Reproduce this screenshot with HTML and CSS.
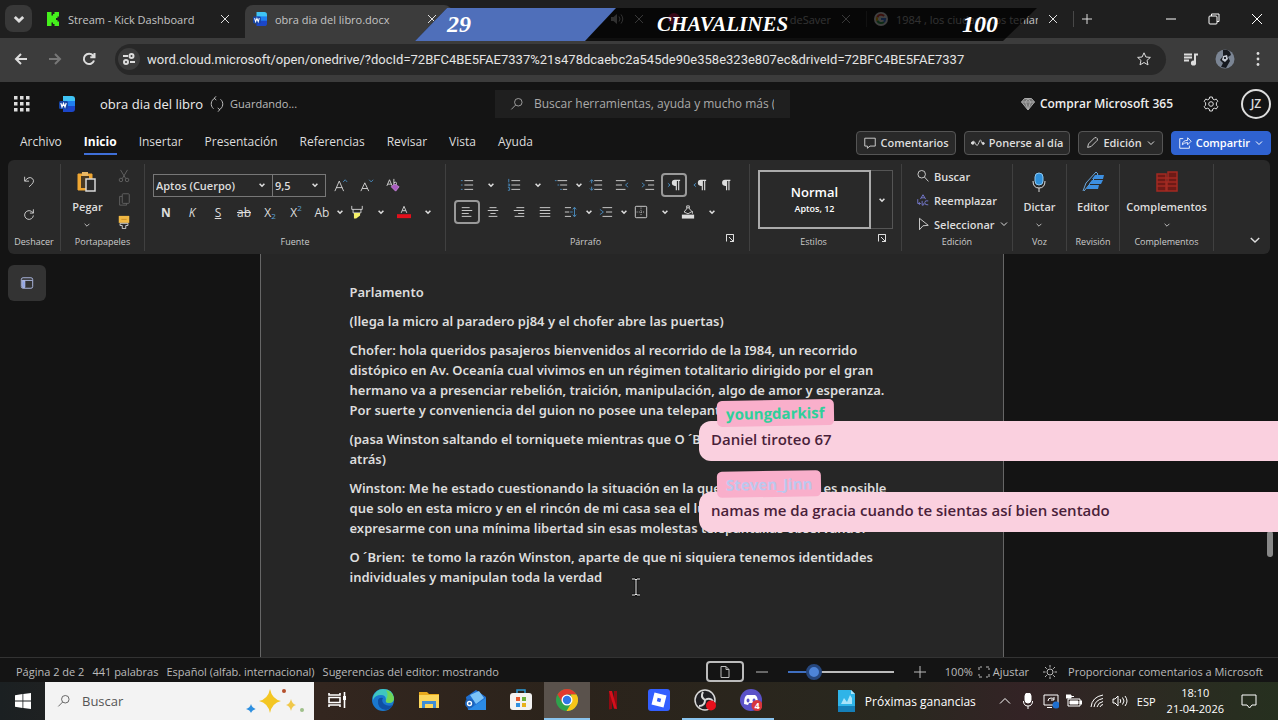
FILE: index.html
```html
<!DOCTYPE html>
<html lang="es">
<head>
    <meta charset="UTF-8">
    <meta name="viewport" content="width=device-width, initial-scale=1.0">
    <title>obra dia del libro.docx</title>
    <link rel="stylesheet" href="styles.css">
</head>
<body>
    <svg class="symbols" aria-hidden="true">
        <symbol id="chevron" viewBox="0 0 10 10"><path d="M2 3.5 5 6.5 8 3.5"/></symbol>
        <symbol id="close" viewBox="0 0 14 14"><path d="M3 3l8 8M11 3l-8 8"/></symbol>
        <symbol id="search" viewBox="0 0 16 16"><circle cx="9.5" cy="6" r="4.3"/><path d="M6.4 9.2 1.5 14.2"/></symbol>
        <symbol id="word" viewBox="0 0 16 16">
            <path fill="#3fc4f5" d="M4 0h9a3 3 0 0 1 3 3v4H4z"/>
            <path fill="#1f7ff0" d="M4 5h12v6H4z"/>
            <path fill="#1b46c8" d="M4 10h12v3a3 3 0 0 1-3 3H4z"/>
            <rect fill="#1646a8" y="5" width="9" height="8" rx="1.5"/>
            <path stroke="#fff" stroke-width="1.2" fill="none" d="M1.8 7l1.2 4 1.5-3.6L6 11l1.2-4"/>
        </symbol>
        <symbol id="launcher" viewBox="0 0 10 10"><path d="M1.5 1.5h7v7M8.5 1.5H1.5v7M4 4l4.5 4.5M8.5 5v3.5H5"/></symbol>
        <symbol id="pilcrow" viewBox="0 0 14 14"><path fill="currentColor" stroke="none" d="M6 1h6v1.4h-1V13H9.7V2.4H8.3V13H7V8H6a3.5 3.5 0 0 1 0-7z"/></symbol>
    </svg>

    <div class="tabstrip">
        <button class="tab-search" aria-label="Buscar pestañas"><svg><use href="#chevron"/></svg></button>
        <div class="tab">
            <svg class="tab-icon" viewBox="0 0 14 14"><path fill="#45f01c" d="M1 0h4.5v3.5H7V2h1.5V0H13v4.5h-1.5V6H10v2h1.500v1.500H13V14H8.500v-2H7v-1.500H5.500V14H1z"/></svg>
            <span class="tab-title">Stream - Kick Dashboard</span>
            <button class="tab-close" aria-label="Cerrar"><svg><use href="#close"/></svg></button>
        </div>
        <div class="tab active">
            <svg class="tab-icon"><use href="#word"/></svg>
            <span class="tab-title">obra dia del libro.docx</span>
            <button class="tab-close" aria-label="Cerrar"><svg><use href="#close"/></svg></button>
        </div>
        <div class="tab">
            <span class="tab-title"></span>
            <svg class="tab-icon" viewBox="0 0 14 14"><path fill="currentColor" d="M1 5h2.500L7 2v10L3.500 9H1z"/><path fill="none" stroke="currentColor" d="M9 4.500q2 2.500 0 5M11 2.500q3.500 4.500 0 9"/></svg>
            <button class="tab-close" aria-label="Cerrar"><svg><use href="#close"/></svg></button>
        </div>
        <div class="tab">
            <svg class="tab-icon" viewBox="0 0 14 14"><circle cx="7" cy="7" r="6" fill="#e0235c"/></svg>
            <span class="tab-title tab-title-end">deSaver</span>
            <button class="tab-close" aria-label="Cerrar"><svg><use href="#close"/></svg></button>
        </div>
        <div class="tab divided">
            <svg class="tab-icon" viewBox="0 0 16 16"><circle cx="8" cy="8" r="8" fill="#fff"/><g fill="none" stroke-width="2.400"><path stroke="#ea4335" d="M3.800 6a4.700 4.700 0 0 1 7.700-1.500"/><path stroke="#fbbc05" d="M3.800 10a4.700 4.700 0 0 1 0-4"/><path stroke="#34a853" d="M11.300 11.300A4.700 4.700 0 0 1 3.800 10"/><path stroke="#4285f4" d="M8 8h4.700a4.700 4.700 0 0 1-1.400 3.300"/></g></svg>
            <span class="tab-title">1984 , los ciudadanos tenían</span>
            <button class="tab-close" aria-label="Cerrar"><svg><use href="#close"/></svg></button>
        </div>
        <button class="new-tab divided" aria-label="Nueva pestaña"><svg viewBox="0 0 14 14"><path d="M7 2v10M2 7h10"/></svg></button>
        <div class="window-buttons">
            <button aria-label="Minimizar"><svg viewBox="0 0 14 14"><path d="M2 7h10"/></svg></button>
            <button aria-label="Restaurar"><svg viewBox="0 0 14 14"><rect x="2" y="4" width="8" height="8" rx="1"/><path d="M4.500 4V2H12v7.500h-2"/></svg></button>
            <button aria-label="Cerrar ventana"><svg viewBox="0 0 14 14"><path d="M2 2l10 10M12 2 2 12"/></svg></button>
        </div>
    </div>

    <div class="toolbar">
        <button class="nav-button" aria-label="Atrás"><svg viewBox="0 0 16 16"><path d="M14 8H3M8 3 3 8l5 5"/></svg></button>
        <button class="nav-button dim" aria-label="Adelante"><svg viewBox="0 0 16 16"><path d="M2 8h11M8 3l5 5-5 5"/></svg></button>
        <button class="nav-button" aria-label="Recargar"><svg viewBox="0 0 16 16"><path d="M13 9.500A5.200 5.200 0 1 1 12 4.500L13.500 6M13.500 2v4.300H9.300"/></svg></button>
        <div class="url-box">
            <button class="site-info" aria-label="Información del sitio"><svg viewBox="0 0 14 14"><path d="M1 4h5M8 10h5"/><circle cx="9.500" cy="4" r="2"/><circle cx="4" cy="10" r="2"/></svg></button>
            <input class="url" type="text" aria-label="Dirección" value="word.cloud.microsoft/open/onedrive/?docId=72BFC4BE5FAE7337%21s478dcaebc2a545de90e358e323e807ec&amp;driveId=72BFC4BE5FAE7337">
            <button class="star" aria-label="Favorito"><svg viewBox="0 0 16 16"><path d="M8 1.800l1.900 4.200 4.500.4-3.400 3 1 4.500L8 11.500l-4 2.400 1-4.500-3.400-3L6.100 6z"/></svg></button>
        </div>
        <button class="nav-button" aria-label="Multimedia"><svg viewBox="0 0 16 16"><path d="M1 3.500h8M1 6.500h8M1 9.500h5M12 12V3.500h3"/><circle cx="10.500" cy="12" r="1.600" fill="currentColor"/></svg></button>
        <button class="nav-button" aria-label="Perfil"><svg class="profile" viewBox="0 0 20 20"><circle cx="10" cy="10" r="9.500" fill="#7b8594" stroke="none"/><path fill="#16191f" stroke="none" d="M8 1q7-1 8 5l-3 2 2 4-4 7-5-1 2-4-3-3 3-4z"/><path fill="#c4c9d2" stroke="none" d="M8 7l4-1 1 4-3 3-3-2z"/><path fill="#20242c" stroke="none" d="M9 8h2v2H9z"/></svg></button>
        <button class="nav-button narrow" aria-label="Menú"><svg viewBox="0 0 16 16"><g fill="currentColor" stroke="none"><circle cx="8" cy="2.500" r="1.400"/><circle cx="8" cy="8" r="1.400"/><circle cx="8" cy="13.500" r="1.400"/></g></svg></button>
    </div>

    <header class="word-header">
        <div class="header-left">
            <button class="icon-button" aria-label="Aplicaciones"><svg viewBox="0 0 16 16"><path fill="currentColor" stroke="none" d="M0 0h3.500v3.500H0zM6 0h3.500v3.500H6zM12 0h3.500v3.500H12zM0 6h3.500v3.500H0zM6 6h3.500v3.500H6zM12 6h3.500v3.500H12zM0 12h3.500v3.500H0zM6 12h3.500v3.500H6zM12 12h3.500v3.500H12z"/></svg></button>
            <svg class="word-logo"><use href="#word"/></svg>
            <span class="doc-name">obra dia del libro</span>
            <span class="saving"><svg viewBox="0 0 16 16"><path d="M6 2.200a6.200 6.200 0 0 0-1.500 10.500M10 13.800A6.200 6.200 0 0 0 11.500 3.300M7 .3 5.200 2.300 7.300 4M9 15.700l1.800-2L8.700 12"/></svg>Guardando...</span>
        </div>
        <label class="search-box">
            <svg><use href="#search"/></svg>
            <input type="search" aria-label="Buscar" placeholder="Buscar herramientas, ayuda y mucho más (Alt+Q)">
        </label>
        <div class="header-right">
            <a class="buy" href="#"><svg viewBox="0 0 14 14"><path fill="#777" stroke="#aaa" d="M3.500 1.500h7L13.500 5 7 13 .5 5z"/><path stroke="#aaa" d="M.5 5h13M4.500 5 7 13l2.500-8L7 1.500z"/></svg>Comprar Microsoft 365</a>
            <button class="icon-button" aria-label="Configuración"><svg viewBox="0 0 16 16"><circle cx="8" cy="8" r="2.300"/><path d="M6.700 1h2.600l.5 2 1.500.8 2-.7 1.500 2.200-1.400 1.500v2.400l1.400 1.500-1.500 2.200-2-.7-1.500.8-.5 2H6.700l-.5-2-1.500-.8-2 .7-1.500-2.200 1.400-1.500V6.800L1.200 5.300l1.500-2.200 2 .7 1.500-.8z"/></svg></button>
            <button class="avatar">JZ</button>
        </div>
    </header>

    <nav class="ribbon-tabs">
        <a href="#">Archivo</a>
        <a href="#" class="current">Inicio</a>
        <a href="#">Insertar</a>
        <a href="#">Presentación</a>
        <a href="#">Referencias</a>
        <a href="#">Revisar</a>
        <a href="#">Vista</a>
        <a href="#">Ayuda</a>
        <div class="ribbon-actions">
            <button class="action"><svg viewBox="0 0 16 16"><path d="M2 2.500h12v9H8L5 14v-2.500H2z"/></svg>Comentarios</button>
            <button class="action"><svg viewBox="0 0 16 16"><path d="M1 8.500q2-5 4 0t4-1 3 0l3 1"/><circle cx="2" cy="8" r="1.500" fill="currentColor"/><circle cx="14" cy="8.500" r="1.200" fill="currentColor"/></svg>Ponerse al día</button>
            <button class="action"><svg viewBox="0 0 16 16"><path d="M3 13l1-4 7-7q2-1 3 1t-1 3l-6 6z"/></svg>Edición<svg class="chev"><use href="#chevron"/></svg></button>
            <button class="action primary"><svg viewBox="0 0 16 16"><path d="M6 3H2v11h11v-3M5 10q0-5 6-5V2l4 4-4 4V7.500q-4 0-6 2.500"/></svg>Compartir<svg class="chev"><use href="#chevron"/></svg></button>
        </div>
    </nav>

    <section class="ribbon">
        <div class="group">
            <div class="group-body stack spread">
                <button class="tool" aria-label="Deshacer"><svg viewBox="0 0 16 16"><path d="M3 2v5h5M3.300 6.700q5-6 8.700-2.500t-4 9.300"/></svg></button>
                <button class="tool" aria-label="Rehacer"><svg viewBox="0 0 16 16"><path d="M13 8.500a5 5 0 1 1-2-4.500l2 1.500M13 1.500v4.300H9"/></svg></button>
            </div>
            <span class="group-label">Deshacer</span>
        </div>
        <div class="group">
            <div class="group-body clipboard">
                <button class="big">
                    <svg viewBox="0 0 22 22"><path fill="#f0a733" stroke="#f0a733" d="M2 3h14v16H2z"/><path fill="#4a3a22" stroke="none" d="M5 5h8v12H5z"/><path fill="#e9b765" stroke="none" d="M6 1h6v4H6z"/><path fill="#2a2a2a" stroke="#d8d8d8" stroke-width="1.500" d="M10 8h9v12h-9z"/></svg>
                    Pegar
                    <svg class="chev"><use href="#chevron"/></svg>
                </button>
                <div class="stack">
                    <button class="tool faded" aria-label="Cortar"><svg viewBox="0 0 16 16"><path d="M4 1l6 10M12 1 6 11"/><circle cx="4.500" cy="12.500" r="2"/><circle cx="11.500" cy="12.500" r="2"/></svg></button>
                    <button class="tool faded" aria-label="Copiar"><svg viewBox="0 0 16 16"><rect x="6" y="2" width="8" height="11" rx="1"/><path d="M6 5H3v10h8v-2"/></svg></button>
                    <button class="tool" aria-label="Copiar formato"><svg viewBox="0 0 16 16"><path fill="#f0b844" stroke="none" d="M2 1h12v8H2z"/><path stroke="#c98a20" d="M5 5h6"/><path d="M3.500 9.500h9v2.500h-2.500V15.500h-4V12H3.500z"/></svg></button>
                </div>
            </div>
            <span class="group-label">Portapapeles</span>
        </div>
        <div class="group">
            <div class="group-body stack">
                <div class="row">
                    <span class="picker font-name"><select aria-label="Fuente"><option>Aptos (Cuerpo)</option></select><svg><use href="#chevron"/></svg></span>
                    <span class="picker font-size"><select aria-label="Tamaño"><option>9,5</option></select><svg><use href="#chevron"/></svg></span>
                    <button class="tool push" aria-label="Aumentar fuente"><svg viewBox="0 0 16 16"><path d="M1 15 6 3.500 11 15M2.500 11h7"/><path class="blue" d="M10.500 4.500l2.300-2.500 2.200 2.500"/></svg></button>
                    <button class="tool" aria-label="Reducir fuente"><svg viewBox="0 0 16 16"><path d="M1 15 5.500 5.500 10 15M2.500 12h6"/><path class="blue" d="M10.500 2l2.300 2.500L15 2"/></svg></button>
                    <button class="tool" aria-label="Borrar formato"><svg viewBox="0 0 16 16"><path d="M1 9 4 2l3 7M2 7h4M9 1v7M9 5.500q3-2 3 1t-3 1"/><path fill="#a95cc0" stroke="#c583d8" d="M6 10l4-3 5 3-4 5z"/></svg></button>
                </div>
                <div class="row">
                    <button class="tool bold">N</button>
                    <button class="tool italic">K</button>
                    <button class="tool underline">S</button>
                    <button class="tool strike">ab</button>
                    <button class="tool">X<sub>2</sub></button>
                    <button class="tool">X<sup>2</sup></button>
                    <button class="tool">Ab</button>
                    <button class="drop tight" aria-label="Mayúsculas"><svg><use href="#chevron"/></svg></button>
                    <button class="tool" aria-label="Resaltado"><svg viewBox="0 0 16 16"><path d="M2 1v4h12V1M3.500 5v4h9V5"/><path fill="#f5f06a" stroke="none" d="M4.500 9h7v3L7 15.500H4.500z"/></svg></button>
                    <button class="drop" aria-label="Color de resaltado"><svg><use href="#chevron"/></svg></button>
                    <button class="tool" aria-label="Color de fuente"><svg viewBox="0 0 16 16"><path d="M4.800 9 8 1.500 11.200 9M6 6.500h4"/><path fill="#e3101c" stroke="none" d="M0 10.500h16V15H0z"/></svg></button>
                    <button class="drop" aria-label="Colores de fuente"><svg><use href="#chevron"/></svg></button>
                </div>
            </div>
            <span class="group-label">Fuente</span>
        </div>
        <div class="group">
            <div class="group-body stack">
                <div class="row">
                    <button class="tool" aria-label="Viñetas"><svg viewBox="0 0 16 16"><path d="M5 3h10M5 8h10M5 13h10"/><path class="blue" d="M1 3h2M1 8h2M1 13h2"/></svg></button>
                    <button class="drop" aria-label="Más viñetas"><svg><use href="#chevron"/></svg></button>
                    <button class="tool" aria-label="Numeración"><svg viewBox="0 0 16 16"><path d="M5 3h10M5 8h10M5 13h10"/><path class="blue" d="M2 1v4M1 7h2v2H1M1 11h2v3H1"/></svg></button>
                    <button class="drop" aria-label="Más numeración"><svg><use href="#chevron"/></svg></button>
                    <button class="tool" aria-label="Lista multinivel"><svg viewBox="0 0 16 16"><path d="M4 3h11M7 8h8M10 13h5"/><path class="blue" d="M1 3h2M4 8h2M7 13h2"/></svg></button>
                    <button class="drop tight" aria-label="Más listas"><svg><use href="#chevron"/></svg></button>
                    <button class="tool" aria-label="Interlineado de lista"><svg viewBox="0 0 16 16"><path d="M6 3h9M6 8h9M6 13h9"/><path class="blue" d="M1 4l2-2 2 2M3 2v4M1 12l2 2 2-2M3 10v4"/></svg></button>
                    <button class="tool" aria-label="Reducir sangría"><svg viewBox="0 0 16 16"><path d="M1 3h11M1 8h7M1 13h11"/><path class="blue" d="M15 5.500 12 8l3 2.500"/></svg></button>
                    <button class="tool" aria-label="Aumentar sangría"><svg viewBox="0 0 16 16"><path d="M5 3h10M8 8h7M5 13h10"/><path class="blue" d="M1 5.500 4 8l-3 2.500"/></svg></button>
                    <button class="tool selected" aria-label="Izquierda a derecha"><svg viewBox="0 0 16 16"><use href="#pilcrow" x="3" y="1" width="14" height="14"/><path class="blue" d="M1 6l2.500 2L1 10"/></svg></button>
                    <button class="tool" aria-label="Derecha a izquierda"><svg viewBox="0 0 16 16"><use href="#pilcrow" x="3" y="1" width="14" height="14"/><path class="blue" d="M3.500 6 1 8l2.500 2"/></svg></button>
                    <button class="tool" aria-label="Mostrar marcas"><svg viewBox="0 0 16 16"><use href="#pilcrow" x="1" y="1" width="14" height="14"/></svg></button>
                </div>
                <div class="row">
                    <button class="tool selected" aria-label="Alinear a la izquierda"><svg viewBox="0 0 16 16"><path d="M2 3h9M2 6.300h12M2 9.700h8M2 13h11"/></svg></button>
                    <button class="tool" aria-label="Centrar"><svg viewBox="0 0 16 16"><path d="M4 3h8M2 6.300h12M5 9.700h6M3 13h10"/></svg></button>
                    <button class="tool" aria-label="Alinear a la derecha"><svg viewBox="0 0 16 16"><path d="M5 3h9M2 6.300h12M7 9.700h7M3 13h11"/></svg></button>
                    <button class="tool" aria-label="Justificar"><svg viewBox="0 0 16 16"><path d="M2 3h12M2 6.300h12M2 9.700h12M2 13h12"/></svg></button>
                    <button class="tool" aria-label="Espaciado"><svg viewBox="0 0 16 16"><path d="M1 3h7M1 8h5M1 13h7"/><path class="blue" d="M10 5l2-2.500L14 5M12 3v10M10 11l2 2.500 2-2.500M7 8h3"/></svg></button>
                    <button class="drop tight" aria-label="Más espaciado"><svg><use href="#chevron"/></svg></button>
                    <button class="tool" aria-label="Sangría"><svg viewBox="0 0 16 16"><path d="M4 3h11M8 8h7M4 13h11"/><path class="blue" d="M1 5l4 3-4 3"/></svg></button>
                    <button class="drop tight" aria-label="Más sangría"><svg><use href="#chevron"/></svg></button>
                    <button class="tool" aria-label="Bordes"><svg viewBox="0 0 16 16"><rect x="1.500" y="1.500" width="13" height="13" rx="1"/><path stroke-dasharray="1 1.500" d="M8 3v10M3 8h10"/></svg></button>
                    <button class="drop" aria-label="Más bordes"><svg><use href="#chevron"/></svg></button>
                    <button class="tool" aria-label="Sombreado"><svg viewBox="0 0 16 16"><path d="M3.500 8 8 2.500l4.500 5L8 10zM6.500 4V1h3v3M13 7v3"/><path fill="currentColor" stroke="none" d="M1 11h14v4.500H1z"/></svg></button>
                    <button class="drop" aria-label="Más sombreado"><svg><use href="#chevron"/></svg></button>
                </div>
            </div>
            <span class="group-label with-launcher">Párrafo</span>
            <button class="launcher" aria-label="Opciones de párrafo"><svg><use href="#launcher"/></svg></button>
        </div>
        <div class="group">
            <div class="group-body styles">
                <button class="style-card"><b>Normal</b><small>Aptos, 12</small></button>
                <button class="style-more" aria-label="Más estilos"><svg><use href="#chevron"/></svg></button>
            </div>
            <span class="group-label with-launcher">Estilos</span>
            <button class="launcher" aria-label="Opciones de estilos"><svg><use href="#launcher"/></svg></button>
        </div>
        <div class="group">
            <div class="group-body edit-list">
                <button><svg viewBox="0 0 16 16"><circle cx="6.500" cy="6" r="4.300"/><path d="M9.700 9.200l4.500 5"/></svg>Buscar</button>
                <button><svg viewBox="0 0 16 16"><g stroke="#7a7fd8"><path d="M5 7l3-5 3 5M6 5.500h4M2 7v5h3M3.500 10.500 5 12l-1.500 1.500"/><path d="M14 9q-4-1-4 2t4 2.500M7 9v5q3 0 2-2.500"/></g></svg>Reemplazar</button>
                <button><svg viewBox="0 0 16 16"><path d="M4 1.500v13l4-4.500 6-.5z"/></svg>Seleccionar<svg class="chev"><use href="#chevron"/></svg></button>
            </div>
            <span class="group-label">Edición</span>
        </div>
        <div class="group">
            <div class="group-body">
                <button class="big">
                    <svg viewBox="0 0 22 22"><rect x="7" y="2" width="8" height="12" rx="4" fill="#2f8fd8" stroke="#8cc8f2"/><path d="M5 10q0 7 6 7t6-7M11 17v4"/></svg>
                    Dictar
                    <svg class="chev"><use href="#chevron"/></svg>
                </button>
            </div>
            <span class="group-label">Voz</span>
        </div>
        <div class="group">
            <div class="group-body">
                <button class="big">
                    <svg viewBox="0 0 22 22"><path stroke="#6aa6dc" d="M1 20 4 12 14 1l2 2-9 11-5 6"/><path fill="#3d8fe0" stroke="none" d="M13 4h9l-1 4H10zM10 9h11l-2 4H7zM7 14h10l-1 4H4z"/></svg>
                    Editor
                </button>
            </div>
            <span class="group-label">Revisión</span>
        </div>
        <div class="group">
            <div class="group-body">
                <button class="big">
                    <svg viewBox="0 0 22 22"><path fill="#6e1a16" stroke="#a32a22" stroke-width="1.500" d="M1 3h9v8H1zM12 1h9v10h-9zM1 11h9v9H1zM11 11h10v9H11zM1 7h20M1 15h20"/></svg>
                    Complementos
                    <svg class="chev"><use href="#chevron"/></svg>
                </button>
            </div>
            <span class="group-label">Complementos</span>
        </div>
        <div class="group last">
            <button class="collapse" aria-label="Contraer la cinta"><svg><use href="#chevron"/></svg></button>
        </div>
    </section>

    <main class="workspace">
        <button class="nav-pane" aria-label="Panel de navegación"><svg viewBox="0 0 16 16"><rect x="1.500" y="2" width="13" height="12" rx="2" stroke="#b9c6f2"/><path fill="#8aa0ea" stroke="#b9c6f2" d="M2 5h12M3 5.500h2.500V13H3z"/></svg></button>
        <article class="page">
            <p>Parlamento</p>
            <p>(llega la micro al paradero pj84 y el chofer abre las puertas)</p>
            <p>Chofer: hola queridos pasajeros bienvenidos al recorrido de la I984, un recorrido<br>distópico en Av. Oceanía cual vivimos en un régimen totalitario dirigido por el gran<br>hermano va a presenciar rebelión, traición, manipulación, algo de amor y esperanza.<br>Por suerte y conveniencia del guion no posee una telepantalla en servicio.</p>
            <p>(pasa Winston saltando el torniquete mientras que O ´Brien lo mira<br>atrás)</p>
            <p>Winston: Me he estado cuestionando la situación en la que vivimos, donde es posible<br>que solo en esta micro y en el rincón de mi casa sea el lugar donde<br>expresarme con una mínima libertad sin esas molestas telepantallas observando.</p>
            <p>O ´Brien:&nbsp; te tomo la razón Winston, aparte de que ni siquiera tenemos identidades<br>individuales y manipulan toda la verdad</p>
        </article>
        <span class="scroll-thumb"></span>
    </main>

    <footer class="status-bar">
        <span>Página 2 de 2</span>
        <span>441 palabras</span>
        <span>Español (alfab. internacional)</span>
        <span>Sugerencias del editor: mostrando</span>
        <div class="zoom">
            <button class="view-mode" aria-label="Vista de página"><svg viewBox="0 0 14 14"><path d="M3 1.500h5l3 3v8H3zM8 1.500v3h3"/></svg></button>
            <button class="zoom-step" aria-label="Alejar"><svg viewBox="0 0 14 14"><path d="M1 7h12"/></svg></button>
            <input type="range" min="0" max="100" value="20" aria-label="Zoom">
            <button class="zoom-step" aria-label="Acercar"><svg viewBox="0 0 14 14"><path d="M1 7h12M7 1v12"/></svg></button>
            <span class="percent">100%</span>
            <button class="fit"><svg viewBox="0 0 14 14"><path d="M2 5V2h3M9 2h3v3M12 9v3H9M5 12H2V9" stroke-dasharray="3 1"/></svg>Ajustar</button>
            <svg class="sun" viewBox="0 0 16 16"><circle cx="8" cy="8" r="3"/><path d="M8 1v2.500M8 12.500V15M1 8h2.500M12.500 8H15M3 3l1.800 1.800M11.200 11.200 13 13M3 13l1.800-1.800M11.200 4.800 13 3"/></svg>
            <a href="#">Proporcionar comentarios a Microsoft</a>
        </div>
    </footer>

    <div class="taskbar">
        <button class="start" aria-label="Inicio"><svg viewBox="0 0 16 16"><path fill="#fff" d="M0 2.200 7.500 1v6.600H0zM8.300.9 16 0v7.600H8.300zM0 8.400h7.500V15L0 13.800zM8.300 8.400H16V16l-7.700-1.100z"/></svg></button>
        <label class="task-search">
            <svg class="lens"><use href="#search"/></svg>
            <input type="search" placeholder="Buscar" aria-label="Buscar en Windows">
            <svg class="sparkles" viewBox="0 0 60 28"><path fill="#f3c623" d="M24 2q2 10 11 12-9 2-11 12-2-10-11-12 9-2 11-12z"/><path fill="#f0c84a" d="M45 12q1 5 5 6-4 1-5 6-1-5-5-6 4-1 5-6z"/><path fill="#2d8fe0" d="M5 17q1 4 5 5-4 1-5 4-1-3-5-4 4-1 5-5z"/><circle cx="38" cy="4" r="2" fill="#b5502c"/><circle cx="56" cy="23" r="2" fill="#9fc08a"/></svg>
        </label>
        <button class="app" aria-label="Vista de tareas"><svg viewBox="0 0 22 22"><path stroke="#fff" stroke-width="1.600" fill="none" d="M3 4v2h11V4M3 18v-2h11v2M3 8.500h11v5H3zM18.500 3v16"/><path fill="#fff" d="M17 7h3v4h-3z"/></svg></button>
        <button class="app" aria-label="Edge"><svg viewBox="0 0 22 22"><circle cx="11" cy="11" r="11" fill="#1a78cf"/><path fill="#3fc6c0" d="M1 8Q4 0 11 0q10 0 11 9 0 5-5 5-4 0-3-3 0-5-5-5-6 0-8 5z"/><path fill="#6fd657" d="M14 1q7 2 8 9-1 4-5 4-4 0-3-3 3-5 0-10z"/><path fill="#0f4fa3" d="M6 11q-1 9 8 10 5-1 7-5-5 2-9-1-3-3-1-6-4-1-5 2z"/></svg></button>
        <button class="app" aria-label="Explorador"><svg viewBox="0 0 22 22"><path fill="#e8a91c" d="M1 3h8l2 2h10v4H1z"/><path fill="#fbd65c" d="M1 6h20v13H1z"/><path fill="#3f8ed6" d="M4 12h14v7h-3v-4H7v4H4z"/></svg></button>
        <button class="app" aria-label="Correo"><svg viewBox="0 0 22 22"><path fill="#1f6fd0" d="M2 8 12 1l10 7v13H4z"/><path fill="#7cc4f7" d="M6 6l9-4 5 7-8 6z"/><path fill="#2b8be6" d="M4 21 22 9v12z"/><circle cx="5.500" cy="14.500" r="4.500" fill="#1b62b8"/><circle cx="5.500" cy="14.500" r="2" fill="none" stroke="#fff" stroke-width="1.400"/></svg></button>
        <button class="app" aria-label="Tienda"><svg viewBox="0 0 22 22"><path fill="none" stroke="#2b9bd8" stroke-width="1.500" d="M7 5V1h8v4"/><rect y="4" width="22" height="17" rx="3" fill="#f2f2f2"/><path fill="#e4572e" d="M6 8h4v4H6z"/><path fill="#6bb13c" d="M12 8h4v4h-4z"/><path fill="#2d8fe0" d="M6 14h4v4H6z"/><path fill="#e8b21c" d="M12 14h4v4h-4z"/></svg></button>
        <button class="app running focused" aria-label="Chrome"><svg viewBox="0 0 22 22"><circle cx="11" cy="11" r="11" fill="#2fa24c"/><path fill="#e23a2e" d="M1.500 5.500a11 11 0 0 1 19 0H11L6 13z"/><path fill="#f6c518" d="M20.500 5.500A11 11 0 0 1 10.500 22L16 13 15 5.500z"/><circle cx="11" cy="11" r="5.500" fill="#fff"/><circle cx="11" cy="11" r="4.200" fill="#2f77e8"/></svg></button>
        <button class="app" aria-label="Netflix"><svg viewBox="0 0 22 22"><path fill="#8f0a12" d="M7 2h3v18l-3 .5zM12 2h3v18l-3-.5z"/><path fill="#d50f1c" d="M7 2h3l5 18-3-.5z"/></svg></button>
        <button class="app" aria-label="Roblox"><svg viewBox="0 0 22 22"><rect width="22" height="22" rx="3" fill="#335fff"/><path fill="#fff" fill-rule="evenodd" d="M6.500 3.500 18.500 6.500 15.500 18.500 3.500 15.500zM9.700 8.800 8.800 12.300l3.500.9.900-3.500z"/></svg></button>
        <button class="app running" aria-label="OBS"><svg viewBox="0 0 22 22"><circle cx="11" cy="11" r="10" fill="#202024" stroke="#d8d8d8" stroke-width="1.500"/><path fill="none" stroke="#d8d8d8" stroke-width="2" d="M11 11Q6 8 9 3M11 11q5-3 8 1M11 11q0 6-6 6"/><circle cx="17" cy="16.500" r="5" fill="#e8101c"/></svg></button>
        <button class="app running" aria-label="Discord"><svg viewBox="0 0 22 22"><circle cx="11" cy="11" r="11" fill="#5b52c8"/><path fill="#fff" fill-rule="evenodd" d="M4 15q0-8 3-9l8 0q3 1 3 9l-4 1-1-2h-4l-1 2zM8 9.500a1.500 2 0 1 0 .1 0M14 9.500a1.500 2 0 1 0 .1 0"/><circle cx="17" cy="16.500" r="5.500" fill="#d8363c"/><text x="17" y="20" text-anchor="middle" class="badge-count">4</text></svg></button>
        <div class="tray">
            <a class="news" href="#"><svg viewBox="0 0 20 22"><path fill="#2fb4e8" d="M2 0h13l4 4v18H2z"/><path fill="#a7e3fa" d="M15 0l4 4h-4zM5 14l3-6 3 4 3-7 2 3v6z"/><path fill="#157fb8" d="M2 16h17v6H2z"/></svg>Próximas ganancias</a>
            <button class="tray-icon" aria-label="Iconos ocultos"><svg viewBox="0 0 16 16"><path d="M3 10.500 8 5.500l5 5"/></svg></button>
            <button class="tray-icon" aria-label="Micrófono"><svg viewBox="0 0 16 16"><rect x="5" y="0" width="6" height="10" rx="3" fill="#fff"/><path d="M3.500 8q0 5 4.500 5t4.500-5M8 13v3"/></svg></button>
            <button class="tray-icon" aria-label="Actualización"><svg viewBox="0 0 16 16"><path d="M1 2h14v10H1zM4 14.500h5M5 8q0-3 3-3 2 0 3 1.500M11 4v3H8"/><circle cx="13" cy="12" r="3.500" fill="#1f6fd0" stroke="none"/></svg></button>
            <button class="tray-icon" aria-label="Batería"><svg viewBox="0 0 16 16"><path d="M2 6h12v7H2z"/><path fill="#fff" d="M4 8h8v3H4zM14 8h2v3h-2zM0 2h5v3H0zM4 3.500h4"/></svg></button>
            <button class="tray-icon" aria-label="Red"><svg viewBox="0 0 16 16"><path d="M2 14Q3 4 14 2M5 14q1-7 9-8.500M8 14q1-4.500 6-5.500M11 14q.5-2 3-2.500"/></svg></button>
            <button class="tray-icon" aria-label="Sonido"><svg viewBox="0 0 16 16"><path d="M1 6h2l3-3v10L3 10H1zM8 6q1.500 2 0 4M10.500 4.500q3 3.500 0 7M13 3q4 5 0 10"/></svg></button>
            <span class="lang">ESP</span>
            <span class="clock"><span>18:10</span><span>21-04-2026</span></span>
            <button class="tray-icon" aria-label="Notificaciones"><svg viewBox="0 0 16 16"><path d="M1 2h14v10H11L8.500 15 6 12H1z"/></svg></button>
        </div>
    </div>

    <svg class="cursor" viewBox="0 0 10 20"><path stroke="#111" stroke-width="3" d="M1 2h3l1 1 1-1h3M5 3v14M1 18h3l1-1 1 1h3"/><path stroke="#eee" d="M1 2h3l1 1 1-1h3M5 3v14M1 18h3l1-1 1 1h3"/></svg>

    <div class="goal">
        <span class="goal-done">29</span>
        <span class="goal-name">CHAVALINES</span>
        <span class="goal-total">100</span>
    </div>

    <div class="chat">
        <div class="message">
            <span class="user green">youngdarkisf</span>
            <p>Daniel tiroteo 67</p>
        </div>
        <div class="message">
            <span class="user pale">Steven_Jinn</span>
            <p>namas me da gracia cuando te sientas así bien sentado</p>
        </div>
    </div>
</body>
</html>
```
FILE: styles.css
```css
* {
    box-sizing: border-box;
}
body {
    margin: 0;
    height: 100vh;
    display: flex;
    flex-direction: column;
    position: relative;
    overflow: hidden;
    font-family: "Open Sans", "Noto Sans", sans-serif;
    font-size: 12px;
    color: #ddd;
    background: #141414;
}
button {
    display: flex;
    align-items: center;
    justify-content: center;
    padding: 0;
    border: 0;
    background: none;
    color: inherit;
    font: inherit;
    white-space: nowrap;
}
input, select {
    font: inherit;
    color: inherit;
    min-width: 0;
    border: 0;
    background: none;
    outline: none;
}
a {
    color: inherit;
    text-decoration: none;
}
svg {
    width: 14px;
    height: 14px;
    flex: none;
    fill: none;
    stroke: currentColor;
}
.symbols {
    position: absolute;
    width: 0;
    height: 0;
}
#word, .tab-icon, .app svg, .sparkles, .news svg, .start svg {
    stroke: none;
}
.chev {
    width: 10px;
    height: 10px;
}

/* browser tabs */
.tabstrip {
    display: flex;
    flex: none;
    height: 38px;
    padding-left: 5px;
    background: #1f1f1f;
}
.tab-search {
    width: 27px;
    height: 27px;
    margin: 5px 6px 0 0;
    border-radius: 8px;
    background: #383838;
}
.tab-search svg {
    stroke-width: 2;
}
.tab {
    flex: 0 1 207px;
    min-width: 0;
    display: flex;
    align-items: center;
    gap: 8px;
    padding: 0 13px 0 8px;
    font-size: 11px;
    font-weight: 500;
    color: #c4c4c4;
}
.tab.active {
    margin-top: 5px;
    padding-bottom: 5px;
    border-radius: 8px 8px 0 0;
    background: #3c3c3c;
}
.divided {
    background: linear-gradient(#484848, #484848) 0 50% / 1px 16px no-repeat;
}
.tab-title {
    flex: 1;
    overflow: hidden;
    white-space: nowrap;
}
.tab-title-end {
    text-align: right;
}
.tab-close {
    color: #e0e0e0;
}
.new-tab {
    width: 28px;
}
.window-buttons {
    display: flex;
    margin-left: auto;
}
.window-buttons button {
    width: 43px;
    color: #fff;
}

/* address bar */
.toolbar {
    display: flex;
    align-items: center;
    flex: none;
    height: 44px;
    padding: 0 4px 2px;
    background: #3c3c3c;
}
.nav-button {
    width: 34px;
    height: 30px;
}
.nav-button svg {
    width: 16px;
    height: 16px;
    stroke-width: 2;
}
.nav-button .profile {
    width: 20px;
    height: 20px;
}
.nav-button.narrow {
    width: 32px;
}
.dim {
    color: #777;
}
.url-box {
    flex: 1;
    display: flex;
    align-items: center;
    height: 31px;
    margin: 0 8px 0 9px;
    padding: 0 14px 0 3px;
    border-radius: 16px;
    background: #282828;
}
.site-info {
    width: 22px;
    height: 22px;
    margin-right: 7px;
    border-radius: 50%;
    background: #3c3c3c;
}
.site-info svg {
    stroke-width: 2;
}
.url {
    flex: 1;
    padding: 0;
    font-family: Roboto, sans-serif;
    font-size: 13px;
    color: #e4e4e4;
}
.star svg {
    width: 16px;
    height: 16px;
}

/* word header */
.word-header {
    display: grid;
    grid-template-columns: 1fr 295px 1fr;
    align-items: center;
    flex: none;
    height: 43px;
    padding: 0 7px 0 14px;
}
.header-left, .header-right {
    display: flex;
    align-items: center;
}
.header-right {
    justify-content: flex-end;
    gap: 30px;
}
.icon-button svg {
    width: 16px;
    height: 16px;
}
.word-logo {
    width: 16px;
    height: 16px;
    margin: 0 25px 0 29px;
}
.doc-name {
    font-size: 13px;
    color: #eee;
}
.saving {
    display: flex;
    align-items: center;
    gap: 5px;
    margin-left: 6px;
    font-size: 11px;
    color: #bbb;
}
.saving svg {
    width: 16px;
    height: 16px;
}
.search-box {
    display: flex;
    align-items: center;
    gap: 10px;
    height: 28px;
    padding: 0 4px 0 15px;
    background: #1f1f1f;
    color: #aaa;
}
.search-box input {
    flex: 1;
    padding: 0;
    font-size: 12px;
}
::placeholder {
    color: inherit;
    opacity: 1;
}
.buy {
    display: flex;
    align-items: center;
    gap: 5px;
    font-weight: 600;
    color: #eee;
}
.avatar {
    width: 30px;
    height: 30px;
    margin-left: -8px;
    border: 2px solid #ddd;
    border-radius: 50%;
    font-weight: 600;
}

/* ribbon tabs */
.ribbon-tabs {
    display: flex;
    align-items: center;
    flex: none;
    gap: 22px;
    height: 35px;
    padding: 0 7px 0 20px;
    font-weight: 500;
}
.ribbon-tabs a {
    padding: 3px 0;
    border-bottom: 2px solid transparent;
}
.ribbon-tabs .current {
    border-color: #3f6fd8;
    font-weight: 700;
    color: #fff;
}
.ribbon-actions {
    display: flex;
    gap: 8px;
    margin-left: auto;
}
.action {
    gap: 4px;
    height: 24px;
    padding: 0 6px;
    border: 1px solid #555;
    border-radius: 4px;
    background: #292929;
    font-size: 11px;
    font-weight: 600;
}
.action.primary {
    border-color: #2f62d0;
    background: #2f62d0;
    color: #fff;
}

/* ribbon */
.ribbon {
    display: grid;
    grid-template-columns: 53px 84px 301px 304px 152px 111px 54px 53px 94px 1fr;
    grid-template-rows: minmax(0, 1fr);
    flex: none;
    height: 94px;
    margin: 0 8px;
    padding: 4px 0 3px;
    border-radius: 6px;
    background: #292929;
}
.group {
    display: grid;
    grid-template-rows: minmax(0, 1fr) 18px;
    grid-template-columns: minmax(0, 1fr);
    border-right: 1px solid #404040;
}
.group.last {
    border: 0;
}
.group-body {
    grid-area: 1 / 1;
    display: flex;
    justify-content: center;
    min-height: 0;
}
.group-label {
    grid-area: 2 / 1;
    justify-self: center;
    font-size: 9px;
    font-weight: 500;
    line-height: 18px;
    color: #ccc;
}
.with-launcher {
    margin-right: 24px;
}
.launcher {
    grid-area: 2 / 1;
    place-self: start end;
    margin-right: 14px;
}
.launcher svg {
    width: 10px;
    height: 10px;
}
.stack {
    display: flex;
    flex-direction: column;
    align-items: flex-start;
    justify-content: flex-start;
    gap: 3px;
}
.group-body.stack {
    padding: 9px 0 0 8px;
}
.group-body.spread {
    gap: 9px;
    padding-top: 6px;
}
.row {
    display: flex;
    align-items: center;
    height: 24px;
}
.tool {
    width: 26px;
    height: 24px;
    font-size: 12px;
}
.tool.selected {
    border: 2px solid #999;
    border-radius: 4px;
}
.tool.push {
    margin-left: 2px;
}
.faded {
    color: #666;
}
.bold {
    font-weight: 700;
}
.italic {
    font-style: italic;
}
.underline {
    text-decoration: underline;
}
.strike {
    text-decoration: line-through;
}
.tool sub, .tool sup {
    font-size: 8px;
    line-height: 8px;
    color: #5aa0d8;
}
.tool sub {
    align-self: flex-end;
    padding-bottom: 4px;
}
.tool sup {
    align-self: flex-start;
    padding-top: 4px;
}
.blue {
    stroke: #4a8fc4;
}
.drop {
    width: 21px;
    height: 24px;
}
.drop.tight {
    width: 9px;
}
.drop svg, .picker svg, .style-more svg {
    width: 8px;
    height: 8px;
    stroke-width: 2;
}
.picker {
    display: grid;
    align-items: center;
    height: 23px;
    border: 1px solid #777;
    font-size: 11px;
    font-weight: 600;
}
.picker select, .picker svg {
    grid-area: 1 / 1;
}
.picker select {
    width: 100%;
    padding: 0 2px;
    appearance: none;
}
.picker svg {
    justify-self: end;
    margin-right: 6px;
    pointer-events: none;
}
.font-name {
    width: 120px;
}
.font-size {
    width: 53px;
    border-left: 0;
}
.clipboard {
    gap: 8px;
    padding-left: 4px;
}
.clipboard .stack {
    gap: 0;
}
.big {
    align-self: flex-start;
    flex-direction: column;
    padding-top: 7px;
    line-height: 18px;
    gap: 5px;
    font-size: 11px;
    font-weight: 600;
}
.big svg {
    width: 22px;
    height: 22px;
}
.big .chev {
    width: 10px;
    height: 8px;
}
.styles {
    padding: 6px 8px 4px;
}
.style-card {
    flex: 1;
    flex-direction: column;
    border: 2px solid #aaa;
    color: #fff;
}
.style-card b {
    font-size: 13px;
    font-weight: 600;
    line-height: 18px;
}
.style-card small {
    font-size: 9px;
    font-weight: 600;
    line-height: 16px;
}
.style-more {
    width: 22px;
    border: 1px solid #555;
    border-left: 0;
}
.edit-list {
    flex-direction: column;
    justify-content: flex-start;
    padding-left: 14px;
}
.edit-list button {
    flex: none;
    justify-content: flex-start;
    gap: 4px;
    height: 24px;
    font-size: 11px;
    font-weight: 600;
}
.collapse {
    grid-area: 2 / 1;
    place-self: start end;
    margin-right: 8px;
}

/* document */
.workspace {
    flex: 1;
    min-height: 0;
    position: relative;
    display: grid;
    grid-template-columns: 1fr 744px 1fr;
    padding-right: 15px;
}
.nav-pane {
    width: 38px;
    height: 36px;
    margin: 11px 0 0 8px;
    border-radius: 6px;
    background: #333;
}
.page {
    overflow: hidden;
    padding: 28px 90px 0 89px;
    border: solid #666;
    border-width: 0 1px;
    background: #262626;
    font-family: "Noto Sans", sans-serif;
    font-size: 13px;
    font-weight: 600;
    line-height: 20px;
    white-space: nowrap;
}
.page p {
    margin: 0 0 9px;
}
.scroll-thumb {
    position: absolute;
    right: 5px;
    bottom: 100px;
    width: 6px;
    height: 26px;
    border-radius: 3px;
    background: #888;
}

/* status bar */
.status-bar {
    display: flex;
    align-items: center;
    flex: none;
    gap: 8px;
    height: 25px;
    padding: 3px 15px 0 16px;
    border-top: 1px solid #333;
    font-size: 11px;
    white-space: nowrap;
    color: #bbb;
}
.zoom {
    display: flex;
    align-items: center;
    margin-left: auto;
}
.view-mode {
    width: 38px;
    height: 21px;
    margin-right: 11px;
    border: 2px solid #bbb;
    border-radius: 4px;
}
.zoom-step {
    width: 14px;
}
.zoom input {
    width: 106px;
    height: 16px;
    margin: 0 19px;
    appearance: none;
    background: linear-gradient(90deg, #3f6fc0 20%, #bbb 20%) center / 100% 2px no-repeat;
}
.zoom input::-webkit-slider-thumb {
    appearance: none;
    width: 16px;
    height: 16px;
    border: 3px solid #26477e;
    border-radius: 50%;
    background: #4d84d8;
}
.percent {
    margin-left: 18px;
}
.fit {
    gap: 2px;
    margin-left: 4px;
}
.sun {
    width: 16px;
    height: 16px;
    margin: 0 10px 0 13px;
}

/* windows taskbar */
.taskbar {
    display: flex;
    flex: none;
    height: 38px;
    background: linear-gradient(90deg, #1b2022, #33261f 25%, #2b231b 45%, #29281f 70%, #332325 80%, #2c2a22 90%, #26301f);
}
.start {
    width: 45px;
}
.start svg {
    width: 16px;
    height: 16px;
}
.task-search {
    width: 269px;
    display: flex;
    align-items: center;
    gap: 11px;
    padding: 0 8px 0 12px;
    background: #f3f3f3;
    color: #555;
}
.task-search input {
    flex: 1;
    padding: 0;
    font-size: 13px;
}
.task-search .sparkles {
    width: 60px;
    height: 28px;
}
.app {
    width: 46px;
    border-bottom: 2px solid transparent;
}
.app svg {
    width: 22px;
    height: 22px;
}
.app.running {
    border-color: #8ac4ee;
}
.app.focused {
    background: #5a524c;
}
.badge-count {
    fill: #fff;
    font-size: 9px;
    font-weight: 700;
}
.tray {
    display: flex;
    align-items: center;
    margin-left: auto;
    padding-right: 18px;
    color: #fff;
}
.news {
    display: flex;
    align-items: center;
    gap: 9px;
    margin-right: 18px;
    white-space: nowrap;
}
.news svg {
    width: 20px;
    height: 22px;
}
.tray-icon {
    width: 23px;
}
.tray-icon svg {
    width: 16px;
    height: 16px;
}
.lang {
    margin: 0 11px 0 5px;
    font-size: 11px;
}
.clock {
    display: flex;
    flex-direction: column;
    align-items: center;
    margin-right: 13px;
    font-size: 11px;
    line-height: 16px;
}

.cursor {
    position: absolute;
    left: 631px;
    top: 577px;
    width: 10px;
    height: 20px;
}

/* stream overlay: goal bar */
.goal {
    position: absolute;
    top: 8px;
    left: 415px;
    width: 622px;
    height: 33px;
    display: grid;
    grid-template-columns: 201px 1fr 140px;
    align-items: center;
    background: rgba(0, 0, 0, 0.75);
    clip-path: polygon(32px 0, 100% 0, calc(100% - 34px) 100%, 0 100%);
    color: #fff;
    font-family: "Liberation Serif", serif;
    font-size: 24px;
    font-style: italic;
    font-weight: 700;
    line-height: 33px;
}
.goal-done {
    padding-left: 32px;
    background: #4f6fba;
    clip-path: polygon(0 0, 100% 0, calc(100% - 31px) 100%, 0 100%);
}
.goal-name {
    padding-left: 41px;
    font-size: 21px;
}
.goal-total {
    padding-left: 65px;
}

/* stream overlay: chat */
.chat {
    position: absolute;
    top: 421px;
    right: 0;
    left: 699px;
    display: grid;
    gap: 31px;
    font-weight: 600;
}
.message {
    position: relative;
    height: 40px;
    padding: 8px 12px;
    border-radius: 12px 0 0 12px;
    background: #fad0df;
    color: #4a1f3a;
}
.message p {
    margin: 0;
    font-size: 15px;
    line-height: 20px;
}
.user {
    position: absolute;
    left: 18px;
    top: -21px;
    padding: 0 9px;
    border-radius: 5px;
    background: #f9afcb;
    font-size: 15px;
    font-weight: 700;
    line-height: 26px;
    transform: rotate(-1deg);
}
.green {
    color: #2fd09a;
}
.pale {
    color: #bcc8ee;
}
```
